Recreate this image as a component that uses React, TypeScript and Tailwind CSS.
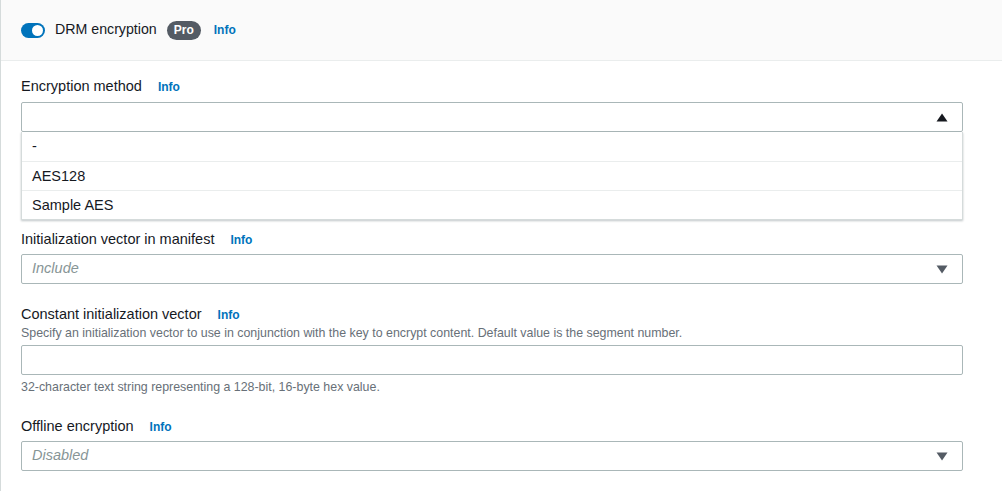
import React from "react";

const font = "font-['Liberation_Sans',Arial,sans-serif]";

function Info({ className = "" }: { className?: string }) {
  return (
    <span className={`text-[12px] font-bold text-[#0073bb] ${className}`}>
      Info
    </span>
  );
}

function Label({ text }: { text: string }) {
  return (
    <div className="flex items-center gap-[16px] h-[18px] pt-[1px]">
      <span className="text-[14.5px] text-[#16191f]">{text}</span>
      <Info />
    </div>
  );
}

function Caret({ up = false, color }: { up?: boolean; color: string }) {
  return (
    <svg width="12" height="9" viewBox="0 0 12 9" className="mr-[14px]">
      {up ? (
        <path d="M6 0.5 L11.5 8.5 L0.5 8.5 Z" fill={color} />
      ) : (
        <path d="M0.5 0.5 L11.5 0.5 L6 8.5 Z" fill={color} />
      )}
    </svg>
  );
}

function Select({ placeholder, open = false }: { placeholder?: string; open?: boolean }) {
  return (
    <div className="h-[30px] border border-[#aab7b8] rounded-[2px] bg-white flex items-center justify-between pl-[10px]">
      <span className="text-[14.5px] italic text-[#879596]">{placeholder}</span>
      <Caret up={open} color={open ? "#16191f" : "#545b64"} />
    </div>
  );
}

const options = ["-", "AES128", "Sample AES"];

export default function App() {
  return (
    <div className={`${font} w-[1003px] h-[491px] bg-white border-l border-[#d5dbdb] overflow-hidden`}>
      {/* header */}
      <div className="h-[61px] bg-[#fafafa] border-b border-[#eaeded] flex items-center pl-[20px] mr-[1px]">
        <div className="w-[24px] h-[15px] rounded-full bg-[#0073bb] flex items-center justify-end pr-[2px]">
          <div className="w-[11px] h-[11px] rounded-full bg-white" />
        </div>
        <span className="ml-[10px] text-[14.2px] text-[#16191f]">DRM encryption</span>
        <span className="ml-[10px] h-[19px] px-[7px] rounded-full bg-[#545b64] text-white text-[12px] font-bold flex items-center">
          Pro
        </span>
        <Info className="ml-[13px]" />
      </div>

      <div className="pl-[20px] pr-[40px]">
        {/* encryption method */}
        <div className="pt-[16px]">
          <Label text="Encryption method" />
          <div className="mt-[7px] relative">
            <Select open />
            <div className="absolute left-0 right-0 top-full bg-white border border-t-0 border-[#d5dbdb] shadow-[0_1px_2px_rgba(0,28,36,0.25)] z-10">
              {options.map((o, i) => (
                <div
                  key={o}
                  className={`h-[29px] flex items-center pl-[10px] pt-[1px] text-[14.5px] text-[#16191f] ${
                    i > 0 ? "border-t border-[#eaeded]" : ""
                  }`}
                >
                  {o}
                </div>
              ))}
            </div>
          </div>
        </div>

        {/* IV in manifest */}
        <div className="mt-[98px]">
          <Label text="Initialization vector in manifest" />
          <div className="mt-[6px]">
            <Select placeholder="Include" />
          </div>
        </div>

        {/* constant IV */}
        <div className="mt-[21px]">
          <Label text="Constant initialization vector" />
          <div className="mt-[2px] text-[12.4px] text-[#687078] leading-[16px]">
            Specify an initialization vector to use in conjunction with the key to encrypt content. Default value is the segment number.
          </div>
          <div className="mt-[4px] h-[30px] border border-[#aab7b8] rounded-[2px] bg-white" />
          <div className="mt-[4px] text-[12.4px] text-[#687078] leading-[16px]">
            32-character text string representing a 128-bit, 16-byte hex value.
          </div>
        </div>

        {/* offline */}
        <div className="mt-[22px]">
          <Label text="Offline encryption" />
          <div className="mt-[6px]">
            <Select placeholder="Disabled" />
          </div>
        </div>
      </div>
    </div>
  );
}
